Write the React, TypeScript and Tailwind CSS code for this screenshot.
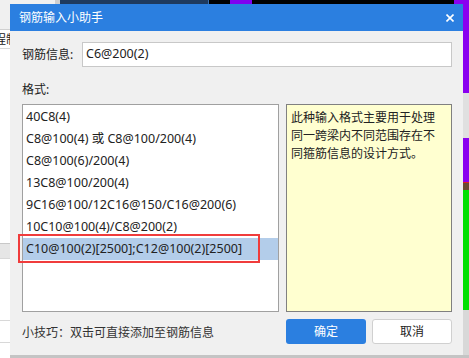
import React from "react";

const formats = [
  "40C8(4)",
  "C8@100(4) 或 C8@100/200(4)",
  "C8@100(6)/200(4)",
  "13C8@100/200(4)",
  "9C16@100/12C16@150/C16@200(6)",
  "10C10@100(4)/C8@200(2)",
  "C10@100(2)[2500];C12@100(2)[2500]",
];

function App() {
  const selected = 6;

  return (
    <div
      className="w-[469px] h-[358px] overflow-hidden flex flex-col bg-[#e8e8e8] text-[12px] text-[#222]"
      style={{ fontFamily: '"Noto Sans", "Noto Sans CJK SC", sans-serif' }}
    >
      {/* window behind, top edge */}
      <div className="h-[4px] flex">
        <div className="w-[55px] bg-[#f0f0f0]" />
        <div className="w-[5px] bg-[#cfcfcf]" />
        <div className="w-[148px] bg-[#1e3a5f]" />
        <div className="w-[1px] bg-[#3a70b0]" />
        <div className="w-[21px] bg-black" />
        <div className="w-[22px] bg-[#8000f0]" />
        <div className="w-[202px] bg-black" />
        <div className="w-[15px] bg-[#8a00f0]" />
      </div>

      <div className="flex h-[351px]">
        {/* left strip of the main window */}
        <div className="w-[10px] flex flex-col overflow-hidden bg-white">
          <div className="h-[26px] bg-[#f0f0f0] border-b border-[#d0d0d0]" />
          <div className="h-[19px] border-b border-[#d8d8d8] flex items-center">
            <span className="ml-[-6px] whitespace-nowrap leading-[19px]">程制</span>
          </div>
          <div className="h-[194px]" />
          <div className="h-[15px] bg-[#e6e6e6] border-t border-[#c8c8c8]" />
          <div className="h-[62px] border-t border-[#d8d8d8]" />
          <div className="h-[22px] border-t border-[#d8d8d8]" />
          <div className="flex-1 border-t border-[#d8d8d8]" />
        </div>

        {/* dialog */}
        <div className="w-[453px] flex flex-col bg-[#f0f0f0]">
          <div className="h-[27px] bg-[#2b7fe0] flex items-center justify-between pl-[9px] pr-[9px] text-white">
            <span className="text-[12px]">钢筋输入小助手</span>
            <svg width="8" height="8" viewBox="0 0 8 8">
              <path d="M0.5 0.5 L7.5 7.5 M7.5 0.5 L0.5 7.5" stroke="white" strokeWidth="1.6" />
            </svg>
          </div>

          <div className="flex-1 flex flex-col pl-[12px] pr-[11px] pt-[11px] pb-[11px]">
            <div className="flex items-center h-[25px]">
              <span className="w-[60px]">钢筋信息:</span>
              <div className="flex-1 h-full border border-[#c8c8c8] bg-white pl-[3px] flex items-center text-[12.5px]">
                C6@200(2)
              </div>
            </div>

            <div className="mt-[15px] h-[16px] leading-[16px]">格式:</div>

            <div className="mt-[6px] flex gap-[7px] h-[208px]">
              <div className="w-[257px] border border-[#a0a0a0] bg-white pt-[1px] text-[12.5px]">
                {formats.map((f, i) => (
                  <div
                    key={f}
                    className={
                      i === selected
                        ? "relative h-[22px] leading-[22px] pl-[3px] bg-[#b3cdea] whitespace-nowrap"
                        : "h-[22px] leading-[22px] pl-[3px] whitespace-nowrap"
                    }
                  >
                    {f}
                    {i === selected && (
                      <div className="absolute left-[-5px] top-[-4px] w-[242px] h-[29px] border-2 border-[#f03c3c]" />
                    )}
                  </div>
                ))}
              </div>
              <div className="flex-1 border border-[#808080] bg-[#ffffd0] pl-[4px] pr-[10px] pt-[4px] leading-[18px]">
                此种输入格式主要用于处理同一跨梁内不同范围存在不同箍筋信息的设计方式。
              </div>
            </div>

            <div className="mt-[7px] h-[25px] flex items-center">
              <span className="flex-1 text-[#333] pt-[3px]">小技巧：双击可直接添加至钢筋信息</span>
              <div className="flex gap-[6px] h-full">
                <button className="w-[80px] h-full rounded-[3px] bg-[#2b7fe0] text-white">确定</button>
                <button className="w-[80px] h-full rounded-[3px] bg-white border border-[#d0d0d0] text-[#222]">
                  取消
                </button>
              </div>
            </div>
          </div>
        </div>

        {/* right strip of the window behind */}
        <div className="w-[6px] flex flex-col">
          <div className="h-[89px] bg-[#8a00f0]" />
          <div className="h-[45px] bg-[#e0e0e0]" />
          <div className="h-[44px] bg-[#8a00f0]" />
          <div className="h-[1px] bg-[#e02020]" />
          <div className="h-[7px] bg-[#6a4a30]" />
          <div className="h-[120px] bg-[#00e000]" />
          <div className="flex-1 bg-[#d8d8d8]" />
        </div>
      </div>

      <div className="h-[3px] flex">
        <div className="w-[10px] bg-white" />
        <div className="flex-1 bg-[#c4c4c4]" />
      </div>
    </div>
  );
}

export default App;
